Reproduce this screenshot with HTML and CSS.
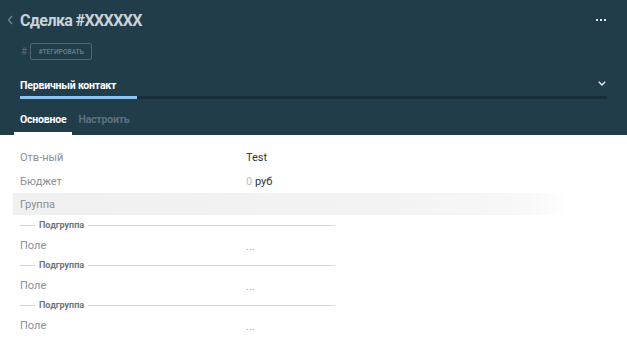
FILE: index.html
```html
<!DOCTYPE html>
<html lang="ru">
<head>
<meta charset="utf-8">
<title>Сделка</title>
<link rel="stylesheet" href="styles.css">
</head>
<body>
<div class="card">
  <header class="head">
    <div class="top">
      <svg class="back" width="6" height="10" viewBox="0 0 6 10"><path d="M5 1 L1.5 5 L5 9" fill="none" stroke="#6f8590" stroke-width="1.3"/></svg>
      <h1 class="title">Сделка #XXXXXX</h1>
      <div class="more"><span></span><span></span><span></span></div>
    </div>
    <div class="tags">
      <span class="hash">#</span>
      <span class="tag">#ТЕГИРОВАТЬ</span>
    </div>
    <div class="pipeline">
      <div class="pipe-row">
        <span class="pipe-name">Первичный контакт</span>
        <svg class="caret" width="8" height="5" viewBox="0 0 8 5"><path d="M0.8 0.8 L4 4 L7.2 0.8" fill="none" stroke="#e8eef1" stroke-width="1.4"/></svg>
      </div>
      <div class="bar"><div class="bar-fill" style="width:20%"></div></div>
    </div>
    <nav class="tabs">
      <span class="tab active">Основное</span>
      <span class="tab">Настроить</span>
    </nav>
  </header>
  <main class="fields">
    <div class="row"><span class="label">Отв-ный</span><span class="value">Test</span></div>
    <div class="row"><span class="label">Бюджет</span><span class="value"><span class="zero">0</span> руб</span></div>
    <div class="group">Группа</div>
    <div class="sub"><span class="sub-text">Подгруппа</span></div>
    <div class="row small"><span class="label">Поле</span><span class="value muted">...</span></div>
    <div class="sub"><span class="sub-text">Подгруппа</span></div>
    <div class="row small"><span class="label">Поле</span><span class="value muted">...</span></div>
    <div class="sub"><span class="sub-text">Подгруппа</span></div>
    <div class="row small"><span class="label">Поле</span><span class="value muted">...</span></div>
  </main>
</div>
</body>
</html>
```
FILE: styles.css
```css
* { box-sizing: border-box; margin: 0; padding: 0; }
html, body { background: #ffffff; }
body {
  font-family: "Roboto", "Noto Sans", "Liberation Sans", sans-serif;
  width: 627px;
  height: 342px;
  overflow: hidden;
}
.head {
  background: #223d4a;
  height: 135px;
  padding: 0 20px;
  display: flex;
  flex-direction: column;
}
.top {
  height: 40px;
  display: flex;
  align-items: center;
  position: relative;
}
.back {
  position: absolute;
  left: -13px;
  top: 15px;
}
.title {
  font-size: 16px;
  font-weight: 700;
  color: #c9d2d7;
  letter-spacing: -0.6px;
  flex: 1;
}
.more {
  display: flex;
  gap: 2px;
  margin-right: 1px;
}
.more span {
  width: 2px;
  height: 2px;
  background: #e3eaee;
}
.tags {
  height: 22px;
  display: flex;
  align-items: center;
  gap: 3px;
}
.hash {
  font-size: 10px;
  color: #536c78;
  margin-left: 1px;
}
.tag {
  border: 1px solid #4e6673;
  border-radius: 2px;
  height: 17px;
  width: 62px;
  font-size: 6.5px;
  letter-spacing: 0.1px;
  color: #7d929c;
  display: flex;
  align-items: center;
  justify-content: center;
  margin-top: 1px;
}
.pipeline {
  padding-top: 13px;
}
.pipe-row {
  height: 20px;
  display: flex;
  align-items: center;
  justify-content: space-between;
  margin-bottom: 1px;
}
.pipe-name {
  font-size: 10.5px;
  font-weight: 700;
  color: #ffffff;
  letter-spacing: -0.2px;
}
.caret { margin-right: 1px; margin-top: -4px; }
.bar {
  height: 3px;
  background: #172d38;
}
.bar-fill {
  height: 3px;
  background: #8cc3ef;
}
.tabs {
  display: flex;
  margin-left: -6px;
  padding-top: 13px;
}
.tab {
  font-size: 10.5px;
  font-weight: 700;
  color: #5d727d;
  line-height: 16px;
  padding: 0 6px 7px;
  letter-spacing: -0.2px;
}
.tab.active {
  color: #ffffff;
  border-bottom: 3px solid #ffffff;
  padding-bottom: 4px;
}
.fields {
  padding: 10px 20px 0;
}
.row {
  display: flex;
  height: 24px;
  align-items: center;
  font-size: 11px;
}
.row.small { height: 20px; }
.label {
  width: 226px;
  color: #8a8f93;
}
.value {
  color: #2b3339;
}
.zero { color: #b9bec2; }
.muted { color: #9ea3a7; font-size: 10px; margin-top: 3px; letter-spacing: 0.3px; }
.group {
  margin: 0 37px 0 -7px;
  height: 22px;
  padding-left: 7px;
  display: flex;
  align-items: center;
  font-size: 11px;
  color: #8a8f93;
  background: linear-gradient(to right, #f0f0f0 0%, #f3f3f3 70%, #f8f8f8 92%, #ffffff 100%);
}
.sub {
  width: 315px;
  height: 20px;
  display: flex;
  align-items: center;
  gap: 4px;
}
.sub::before {
  content: "";
  width: 15px;
  height: 1px;
  background: #d4d6d8;
}
.sub::after {
  content: "";
  flex: 1;
  height: 1px;
  background: #d4d6d8;
}
.sub-text {
  font-size: 9px;
  font-weight: 700;
  color: #6c767e;
}
```
